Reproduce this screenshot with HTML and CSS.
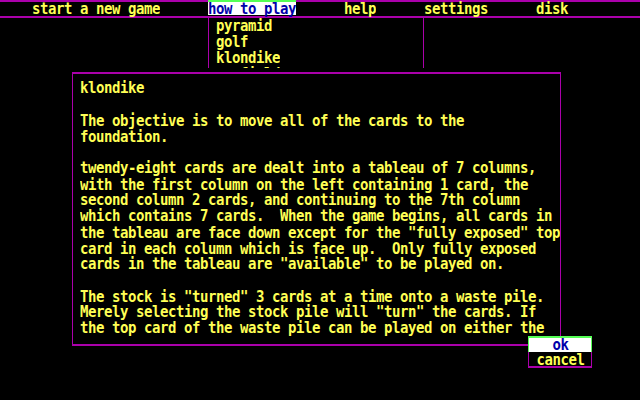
FILE: index.html
```html
<!DOCTYPE html>
<html lang="en">
<head>
<meta charset="utf-8">
<title>solitaire - how to play</title>
<link rel="stylesheet" href="styles.css">
</head>
<body>
<div class="screen">
  <nav class="menubar">
    <span class="menu-item"><span class="tx">start a new game</span></span>
    <span class="menu-item active"><span class="tx">how to play</span></span>
    <span class="menu-item"><span class="tx">help</span></span>
    <span class="menu-item"><span class="tx">settings</span></span>
    <span class="menu-item"><span class="tx">disk</span></span>
  </nav>

  <ul class="dropdown">
    <li><span class="tx">pyramid</span></li>
    <li><span class="tx">golf</span></li>
    <li><span class="tx">klondike</span></li>
    <li><span class="tx">canfield</span></li>
  </ul>

  <section class="dialog">
<pre class="dialog-text">klondike

The objective is to move all of the cards to the
foundation.

twendy-eight cards are dealt into a tableau of 7 columns,
with the first column on the left containing 1 card, the
second column 2 cards, and continuing to the 7th column
which contains 7 cards.  When the game begins, all cards in
the tableau are face down except for the "fully exposed" top
card in each column which is face up.  Only fully exposed
cards in the tableau are "available" to be played on.

The stock is "turned" 3 cards at a time onto a waste pile.
Merely selecting the stock pile will "turn" the cards. If
the top card of the waste pile can be played on either the</pre>
  </section>

  <div class="choices">
    <div class="choice selected"><span class="tx">ok</span></div>
    <div class="choice"><span class="tx">cancel</span></div>
  </div>
</div>
</body>
</html>
```

FILE: styles.css
```css
html, body {
  margin: 0;
  padding: 0;
  background: #000000;
}

.screen {
  position: relative;
  width: 640px;
  height: 400px;
  overflow: hidden;
  background: #000000;
  color: #ffff55;
  font-family: "DejaVu Sans Mono", "Liberation Mono", monospace;
  font-weight: bold;
  font-size: 14px;
  letter-spacing: -0.43px;
}

/* tall, narrow text-mode glyphs */
.tx {
  display: inline-block;
  white-space: pre;
  transform: scaleY(1.12);
}

/* menu bar */
.menubar {
  display: flex;
  gap: 48px;
  height: 14px;
  padding-left: 32px;
  border-top: 2px solid #aa00aa;
  border-bottom: 2px solid #aa00aa;
}

.menu-item {
  display: block;
  height: 14px;
  line-height: 14px;
  white-space: pre;
}

.menu-item .tx {
  line-height: 14px;
  position: relative;
  top: -1px;
}

.menu-item.active {
  margin-top: -2px;
  height: 13px;
  border-top: 2px solid #55ff55;
  background: #ffffff;
  color: #0000aa;
}

/* drop-down list under "how to play" */
.dropdown {
  position: absolute;
  left: 208px;
  top: 18px;
  width: 216px;
  height: 50px;
  box-sizing: border-box;
  margin: 0;
  padding: 0 0 0 7px;
  list-style: none;
  overflow: hidden;
  border-left: 1px solid #aa00aa;
  border-right: 1px solid #aa00aa;
  background: #000000;
}

.dropdown li {
  height: 16px;
  line-height: 16px;
  margin-top: -1px;
  margin-bottom: 1px;
}

.dropdown .tx {
  line-height: 16px;
}

/* help dialog */
.dialog {
  position: absolute;
  left: 72px;
  top: 72px;
  width: 489px;
  height: 274px;
  box-sizing: border-box;
  padding: 6px 0 0 7px;
  border-top: 2px solid #aa00aa;
  border-bottom: 2px solid #aa00aa;
  border-left: 1px solid #aa00aa;
  border-right: 1px solid #aa00aa;
  background: #000000;
  overflow: hidden;
}

.dialog-text {
  margin: 0;
  font: inherit;
  line-height: 14.2857px;
  white-space: pre;
  transform: scaleY(1.12);
  transform-origin: left top;
}

/* ok / cancel chooser */
.choices {
  position: absolute;
  left: 528px;
  top: 336px;
  width: 64px;
  background: #000000;
}

.choice {
  box-sizing: border-box;
  height: 16px;
  line-height: 14px;
  text-align: center;
  padding-left: 1px;
  border-left: 1px solid #aa00aa;
  border-right: 1px solid #aa00aa;
  border-bottom: 2px solid #aa00aa;
}

.choice .tx {
  line-height: 14px;
}

.choice.selected {
  border-top: 2px solid #55ff55;
  border-bottom: 0;
  border-left-color: #55ff55;
  border-right-color: #55ff55;
  background: #ffffff;
  color: #0000aa;
}

.choice.selected .tx {
  position: relative;
  top: -1px;
}
```
